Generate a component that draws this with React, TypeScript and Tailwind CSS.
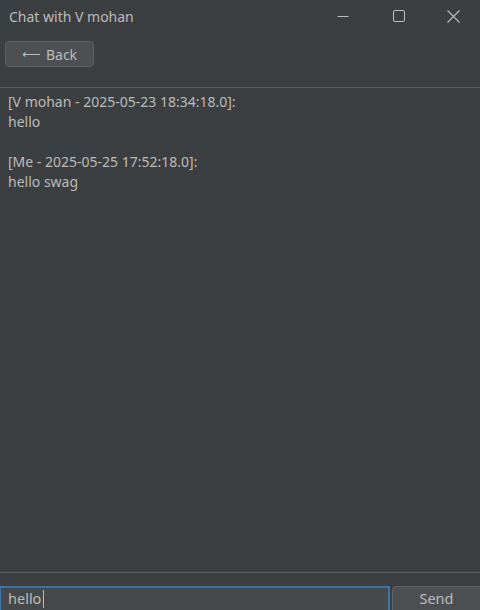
import React from 'react';

const messages = [
    { from: 'V mohan', at: '2025-05-23 18:34:18.0', text: 'hello' },
    { from: 'Me', at: '2025-05-25 17:52:18.0', text: 'hello swag' },
];

const font = { fontFamily: '"Noto Sans", "Open Sans", sans-serif' };

const TitleBar: React.FC = () => (
    <div className="flex h-8 items-center bg-[#3c3f41]">
        <span className="pl-[9px] text-[14px] text-[#bbbbbb]">Chat with V mohan</span>
        <div className="ml-auto flex h-full">
            <button className="flex w-[56px] items-center justify-center" aria-label="Minimize">
                <svg width="12" height="12" viewBox="0 0 12 12">
                    <path d="M0.5 6.5h11" stroke="#bdbdbd" strokeWidth="1" />
                </svg>
            </button>
            <button className="flex w-[55px] items-center justify-center" aria-label="Maximize">
                <svg width="12" height="12" viewBox="0 0 12 12">
                    <rect x="0.5" y="0.5" width="11" height="11" rx="1.5" fill="none" stroke="#bdbdbd" strokeWidth="1" />
                </svg>
            </button>
            <button className="flex w-[54px] items-center justify-center" aria-label="Close">
                <svg width="13" height="13" viewBox="0 0 13 13">
                    <path d="M0.5 0.5l12 12M12.5 0.5l-12 12" stroke="#bdbdbd" strokeWidth="1.1" />
                </svg>
            </button>
        </div>
    </div>
);

export default function App() {
    return (
        <div className="flex h-[610px] w-[480px] flex-col overflow-hidden bg-[#3c3f41]" style={font}>
            <TitleBar />
            <div className="flex h-[55px] items-start px-[5px] pt-[9px]">
                <button className="flex h-[26px] w-[89px] items-center justify-center gap-[5px] rounded-[4px] border border-[#5e6163] bg-[#4c5052] text-[14px] text-[#bbbbbb]">
                    <span className="text-[13px] leading-none">⟵</span>
                    <span>Back</span>
                </button>
            </div>
            <div className="h-px bg-[#5e6163]" />
            <div className="flex-1 px-2 pt-[4px] text-[14px] leading-[20px] text-[#bbbbbb]">
                {messages.map((m, i) => (
                    <div key={i}>
                        {i > 0 && <div className="h-[20px]" />}
                        <div>[{m.from} - {m.at}]:</div>
                        <div>{m.text}</div>
                    </div>
                ))}
            </div>
            <div className="h-px bg-[#5e6163]" />
            <div className="flex h-[37px] items-end gap-[2px]">
                <div className="flex h-[24px] flex-1 items-center border-t-2 border-r-2 border-l border-[#3d73ad] bg-[#45494a] pl-[7px] text-[14.5px] text-[#bbbbbb]">
                    <span>hello</span>
                    <span className="ml-[2px] h-[18px] w-px bg-[#bbbbbb]" />
                </div>
                <button className="h-[24px] w-[88px] rounded-tl-[4px] border-t border-l border-[#5e6163] bg-[#4c5052] text-[14.5px] text-[#bbbbbb]">
                    Send
                </button>
            </div>
        </div>
    );
}
